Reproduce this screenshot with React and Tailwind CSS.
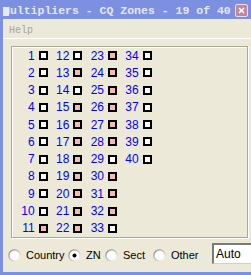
import clsx from 'clsx'

const worked = new Set([11, 13, 15, 16, 17, 18, 19, 20, 21, 22, 23, 24, 25, 26, 27, 28, 30, 31, 32])

function Radio({ label, checked, className }) {
  return (
    <div className={clsx('flex items-center h-[13px] mt-[6px]', className)}>
      <svg width="13" height="13" viewBox="0 0 13 13" className="shrink-0">
        <defs>
          <linearGradient id="radioEdge" x1="0" y1="0" x2="1" y2="1">
            <stop offset="0" stopColor="#7c7c7c" />
            <stop offset="0.55" stopColor="#c8c8c8" />
            <stop offset="1" stopColor="#ffffff" />
          </linearGradient>
        </defs>
        <circle cx="6.5" cy="6.5" r="5.6" fill="#fbfbf8" stroke="url(#radioEdge)" strokeWidth="1.2" />
        {checked && <circle cx="6.5" cy="6.5" r="2" fill="#000" />}
      </svg>
      <span className="ml-[5px] text-[11px] leading-none text-black font-['Liberation_Sans',Arial,sans-serif] whitespace-nowrap">
        {label}
      </span>
    </div>
  )
}

export default function App() {
  const zones = Array.from({ length: 40 }, (_, i) => i + 1)

  return (
    <div className="w-[251px] h-[275px] overflow-hidden bg-[#7d8fe0] flex flex-col">
      {/* title bar */}
      <div className="h-[19px] shrink-0 flex items-start">
        <div className="relative flex-1 overflow-hidden whitespace-nowrap pl-[3px]">
          <span className="block text-[11.5px] leading-[19px] pt-[1px] font-bold text-[#e2e8fa] font-['Liberation_Mono',monospace]">
            Multipliers - CQ Zones - 19 of 40
          </span>
          <span className="absolute left-[3px] top-[7px] w-[6px] h-[9px] bg-[#e4eafa]" />
        </div>
        <div className="mt-[4px] mr-[3px] ml-[1px] w-[13px] h-[13px] shrink-0 bg-[#c4869b] border border-[#eadcea] rounded-[2px] flex items-center justify-center">
          <svg width="7" height="7" viewBox="0 0 7 7">
            <path d="M1 1L6 6M6 1L1 6" stroke="#fff" strokeWidth="1.6" />
          </svg>
        </div>
      </div>

      {/* window body */}
      <div className="flex-1 ml-[3px] mb-[3px] bg-[#ece9d8] flex flex-col">
        <div className="h-[20px] shrink-0 border-b border-white pl-[6px] pt-[5px]">
          <span className="block text-[10px] leading-[14px] text-[#a6a59c] font-['Liberation_Mono',monospace]">Help</span>
        </div>

        <div className="mt-[7px] ml-[8px] w-[237px] h-[192px] shrink-0 border border-[#aca899] shadow-[1px_1px_0_#fff,inset_1px_1px_0_#fff]">
          <div className="grid grid-flow-col grid-rows-[repeat(11,17.27px)] grid-cols-[repeat(4,34.67px)] pl-[1px]">
            {zones.map(n => (
              <div key={n} className="flex items-center">
                <span className="w-[22px] text-right text-[12px] leading-none text-[#0000ff] font-['Liberation_Sans',Arial,sans-serif]">
                  {n}
                </span>
                <span
                  className={clsx(
                    'ml-[4px] w-[9px] h-[9px] border-2 border-black',
                    worked.has(n) ? 'bg-[#f7b8ba]' : 'bg-white'
                  )}
                />
              </div>
            ))}
          </div>
        </div>

        <div className="mt-[5px] pl-[5px] flex items-start">
          <Radio label="Country" className="w-[60px] shrink-0" />
          <Radio label="ZN" checked className="w-[37px] shrink-0" />
          <Radio label="Sect" className="w-[48px] shrink-0" />
          <Radio label="Other" className="w-[59px] shrink-0" />
          <div className="w-[50px] h-[21px] shrink-0 bg-white border-t-2 border-l-2 border-b border-r border-t-[#7a7a7a] border-l-[#7a7a7a] border-b-[#d4d0c8] border-r-[#d4d0c8] pl-[2px] flex items-center">
            <span className="text-[12px] leading-none text-black font-['Liberation_Sans',Arial,sans-serif]">Auto</span>
          </div>
        </div>
      </div>
    </div>
  )
}
